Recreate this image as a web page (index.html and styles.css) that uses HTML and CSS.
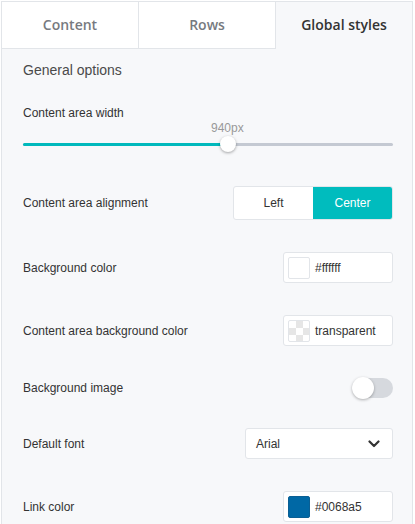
FILE: index.html
```html
<!DOCTYPE html>
<html>
<head>
<meta charset="utf-8">
<link rel="stylesheet" href="styles.css">
</head>
<body>
<div class="panel">
  <div class="tabs">
    <div class="tab">Content</div>
    <div class="tab">Rows</div>
    <div class="tab active">Global styles</div>
  </div>
  <div class="body">
    <div class="section-title">General options</div>
    <div class="slider-block">
      <div class="label">Content area width</div>
      <div class="slider-value"><span>940px</span></div>
      <div class="slider">
        <div class="track"><div class="fill"></div></div>
        <div class="thumb"></div>
      </div>
    </div>
    <div class="rows">
      <div class="row">
        <div class="label">Content area alignment</div>
        <div class="segmented">
          <div class="seg">Left</div>
          <div class="seg on">Center</div>
        </div>
      </div>
      <div class="row">
        <div class="label">Background color</div>
        <div class="color-input">
          <span class="swatch white"></span><span class="cval">#ffffff</span>
        </div>
      </div>
      <div class="row">
        <div class="label">Content area background color</div>
        <div class="color-input">
          <span class="swatch checker"></span><span class="cval">transparent</span>
        </div>
      </div>
      <div class="row toggle-row">
        <div class="label">Background image</div>
        <div class="toggle"><div class="knob"></div></div>
      </div>
      <div class="row">
        <div class="label">Default font</div>
        <div class="select">
          <span>Arial</span>
          <svg class="chev" width="12" height="8" viewBox="0 0 12 8"><path d="M1.5 1.5 L6 6 L10.5 1.5" fill="none" stroke="#333" stroke-width="2.2" stroke-linecap="round" stroke-linejoin="round"/></svg>
        </div>
      </div>
      <div class="row">
        <div class="label">Link color</div>
        <div class="color-input">
          <span class="swatch blue"></span><span class="cval">#0068a5</span>
        </div>
      </div>
    </div>
  </div>
</div>
</body>
</html>
```

FILE: styles.css
```css
* { box-sizing: border-box; }
html, body { margin: 0; padding: 0; background: #fff; }
body { padding: 1px 0 0 1px; font-family: "Liberation Sans", Arial, sans-serif; }
.panel {
  width: 412px;
  height: 540px;
  border: 1px solid #e2e5e9;
  border-bottom: none;
  background: #f7f8fa;
  overflow: hidden;
}
.tabs { display: flex; height: 47px; }
.tab {
  flex: 1;
  display: flex;
  align-items: center;
  justify-content: center;
  background: #fff;
  border-bottom: 1px solid #e2e5e9;
  border-right: 1px solid #e2e5e9;
  font-family: "Open Sans", sans-serif;
  font-weight: 600;
  font-size: 14px;
  color: #777a80;
  padding-bottom: 1px;
}
.tab:nth-child(2) { flex: 0 0 137px; }
.tab.active {
  background: #f7f8fa;
  border-bottom-color: transparent;
  border-right: none;
  color: #333;
}
.body { padding: 12px 19px 0 21px; }
.section-title { font-size: 14px; color: #4a4a4a; line-height: 18px; }
.label { font-size: 12px; color: #333; line-height: 14px; }
.slider-block { margin-top: 27px; }
.slider-value { font-size: 12px; color: #999; margin-top: 1px; line-height: 14px; padding-left: 188px; }
.slider { position: relative; height: 18px; margin-top: 0; }
.track { position: absolute; left: 0; right: 0; top: 8px; height: 3px; border-radius: 2px; background: #c4c9d2; }
.fill { width: 205px; height: 100%; background: #00b9bc; border-radius: 2px; }
.thumb {
  position: absolute;
  left: 197px;
  top: 1px;
  width: 16px;
  height: 16px;
  border-radius: 50%;
  background: #fff;
  box-shadow: 0 1px 3px rgba(0,0,0,0.35);
}
.rows { display: flex; flex-direction: column; gap: 32px; margin-top: 33px; }
.row { display: flex; align-items: center; justify-content: space-between; }
.toggle-row { margin-bottom: -2px; }
.segmented {
  display: flex;
  width: 160px;
  height: 34px;
  border: 1px solid #e2e5e9;
  border-radius: 3px;
  overflow: hidden;
  background: #fff;
}
.seg { flex: 1; display: flex; align-items: center; justify-content: center; font-size: 12px; color: #333; }
.seg.on { background: #00bcbe; color: #fff; }
.color-input {
  display: flex;
  align-items: center;
  width: 110px;
  height: 31px;
  border: 1px solid #e2e5e9;
  border-radius: 3px;
  background: #fff;
  padding-left: 4px;
}
.swatch { width: 22px; height: 22px; border-radius: 2px; display: block; flex: none; }
.swatch.white { background: #fff; border: 1px solid #e2e5e9; }
.swatch.blue { background: #0068a5; border: 1px solid #0a5f94; }
.swatch.checker {
  border: 1px solid #e2e5e9;
  background-color: #fff;
  background-image:
    linear-gradient(45deg, #e6e6e6 25%, transparent 25%, transparent 75%, #e6e6e6 75%),
    linear-gradient(45deg, #e6e6e6 25%, transparent 25%, transparent 75%, #e6e6e6 75%);
  background-size: 14px 14px;
  background-position: 0 0, 7px 7px;
}
.cval { font-size: 12px; color: #333; margin-left: 5px; }
.toggle {
  position: relative;
  width: 41px;
  height: 20px;
  border-radius: 10px;
  background: #d6d9de;
}
.knob {
  position: absolute;
  left: 0;
  top: 0;
  width: 22px;
  height: 22px;
  margin-top: -1px;
  border-radius: 50%;
  background: #fff;
  box-shadow: 0 1px 3px rgba(0,0,0,0.3);
}
.select {
  display: flex;
  align-items: center;
  justify-content: space-between;
  width: 148px;
  height: 31px;
  border: 1px solid #e2e5e9;
  border-radius: 3px;
  background: #fff;
  padding: 0 12px 0 10px;
  font-size: 12px;
  color: #333;
}
.chev { display: block; }
```
